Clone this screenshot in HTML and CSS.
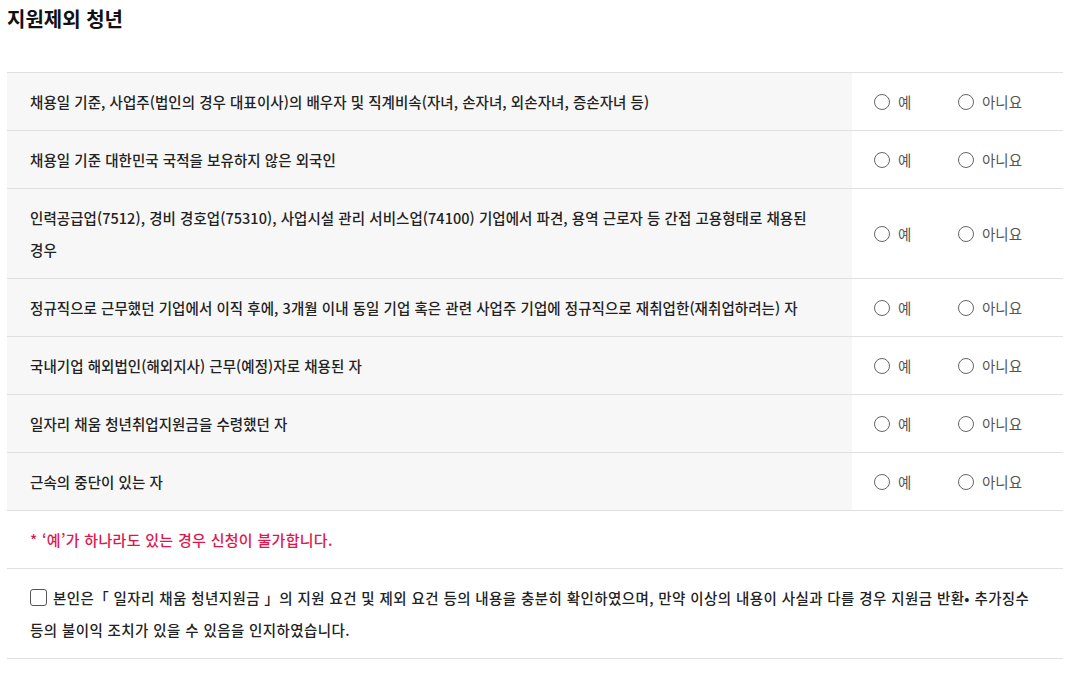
FILE: index.html
```html
<!DOCTYPE html>
<html lang="ko">
<head>
<meta charset="utf-8">
<title>지원제외 청년</title>
<link rel="stylesheet" href="styles.css">
</head>
<body>
<div class="page">
  <h2 class="title">지원제외 청년</h2>
  <div class="table">
    <div class="row">
      <div class="label">채용일 기준, 사업주(법인의 경우 대표이사)의 배우자 및 직계비속(자녀, 손자녀, 외손자녀, 증손자녀 등)</div>
      <div class="choices">
        <label class="opt yes"><span class="radio"></span>예</label>
        <label class="opt"><span class="radio"></span>아니요</label>
      </div>
    </div>
    <div class="row">
      <div class="label">채용일 기준 대한민국 국적을 보유하지 않은 외국인</div>
      <div class="choices">
        <label class="opt yes"><span class="radio"></span>예</label>
        <label class="opt"><span class="radio"></span>아니요</label>
      </div>
    </div>
    <div class="row">
      <div class="label">인력공급업(7512), 경비 경호업(75310), 사업시설 관리 서비스업(74100) 기업에서 파견, 용역 근로자 등 간접 고용형태로 채용된<br>경우</div>
      <div class="choices">
        <label class="opt yes"><span class="radio"></span>예</label>
        <label class="opt"><span class="radio"></span>아니요</label>
      </div>
    </div>
    <div class="row">
      <div class="label">정규직으로 근무했던 기업에서 이직 후에, 3개월 이내 동일 기업 혹은 관련 사업주 기업에 정규직으로 재취업한(재취업하려는) 자</div>
      <div class="choices">
        <label class="opt yes"><span class="radio"></span>예</label>
        <label class="opt"><span class="radio"></span>아니요</label>
      </div>
    </div>
    <div class="row">
      <div class="label">국내기업 해외법인(해외지사) 근무(예정)자로 채용된 자</div>
      <div class="choices">
        <label class="opt yes"><span class="radio"></span>예</label>
        <label class="opt"><span class="radio"></span>아니요</label>
      </div>
    </div>
    <div class="row">
      <div class="label">일자리 채움 청년취업지원금을 수령했던 자</div>
      <div class="choices">
        <label class="opt yes"><span class="radio"></span>예</label>
        <label class="opt"><span class="radio"></span>아니요</label>
      </div>
    </div>
    <div class="row">
      <div class="label">근속의 중단이 있는 자</div>
      <div class="choices">
        <label class="opt yes"><span class="radio"></span>예</label>
        <label class="opt"><span class="radio"></span>아니요</label>
      </div>
    </div>
  </div>
  <p class="notice">* ‘예’가 하나라도 있는 경우 신청이 불가합니다.</p>
  <div class="agree">
    <span class="checkbox"></span>본인은「 일자리 채움 청년지원금 」의 지원 요건 및 제외 요건 등의 내용을 충분히 확인하였으며, 만약 이상의 내용이 사실과 다를 경우 지원금 반환• 추가징수<br>등의 불이익 조치가 있을 수 있음을 인지하였습니다.
  </div>
</div>
</body>
</html>
```

FILE: styles.css
```css
html, body {
  margin: 0;
  padding: 0;
  background: #fff;
}

body {
  font-family: "Noto Sans CJK KR", "Noto Sans", sans-serif;
  color: #222;
}

.page {
  width: 1056px;
  padding-left: 7px;
}

.title {
  margin: 0;
  font-size: 20px;
  line-height: 38px;
  font-weight: 700;
  color: #111;
  letter-spacing: 0;
  padding-bottom: 34px;
}

.table {
  border-top: 1px solid #e0e0e0;
}

.row {
  display: grid;
  grid-template-columns: 845px 1fr;
  border-bottom: 1px solid #e0e0e0;
}

.label {
  background: #f7f7f7;
  padding: 13px 20px 12px 23px;
  font-size: 14.5px;
  line-height: 32px;
  font-weight: 500;
  letter-spacing: 0.05px;
  color: #222;
}

.choices {
  display: flex;
  align-items: center;
  padding-left: 22px;
}

.opt {
  display: flex;
  align-items: center;
  gap: 8px;
  font-size: 14.5px;
  color: #555;
  font-weight: 400;
}

.opt.yes {
  width: 84px;
}

.radio {
  width: 14px;
  height: 14px;
  border: 1px solid #666;
  border-radius: 50%;
  background: #fff;
  box-sizing: content-box;
}

.notice {
  margin: 0;
  padding: 13px 0 12px 23px;
  line-height: 32px;
  font-size: 15px;
  font-weight: 500;
  letter-spacing: 0.3px;
  color: #e0174d;
  border-bottom: 1px solid #e0e0e0;
}

.agree {
  padding: 13px 0 12px 23px;
  font-size: 14.5px;
  line-height: 32px;
  font-weight: 500;
  letter-spacing: 0.4px;
  color: #222;
  border-bottom: 1px solid #e0e0e0;
}

.checkbox {
  display: inline-block;
  width: 15px;
  height: 15px;
  border: 1px solid #555;
  border-radius: 3px;
  vertical-align: -2px;
  margin-right: 6px;
}
```
